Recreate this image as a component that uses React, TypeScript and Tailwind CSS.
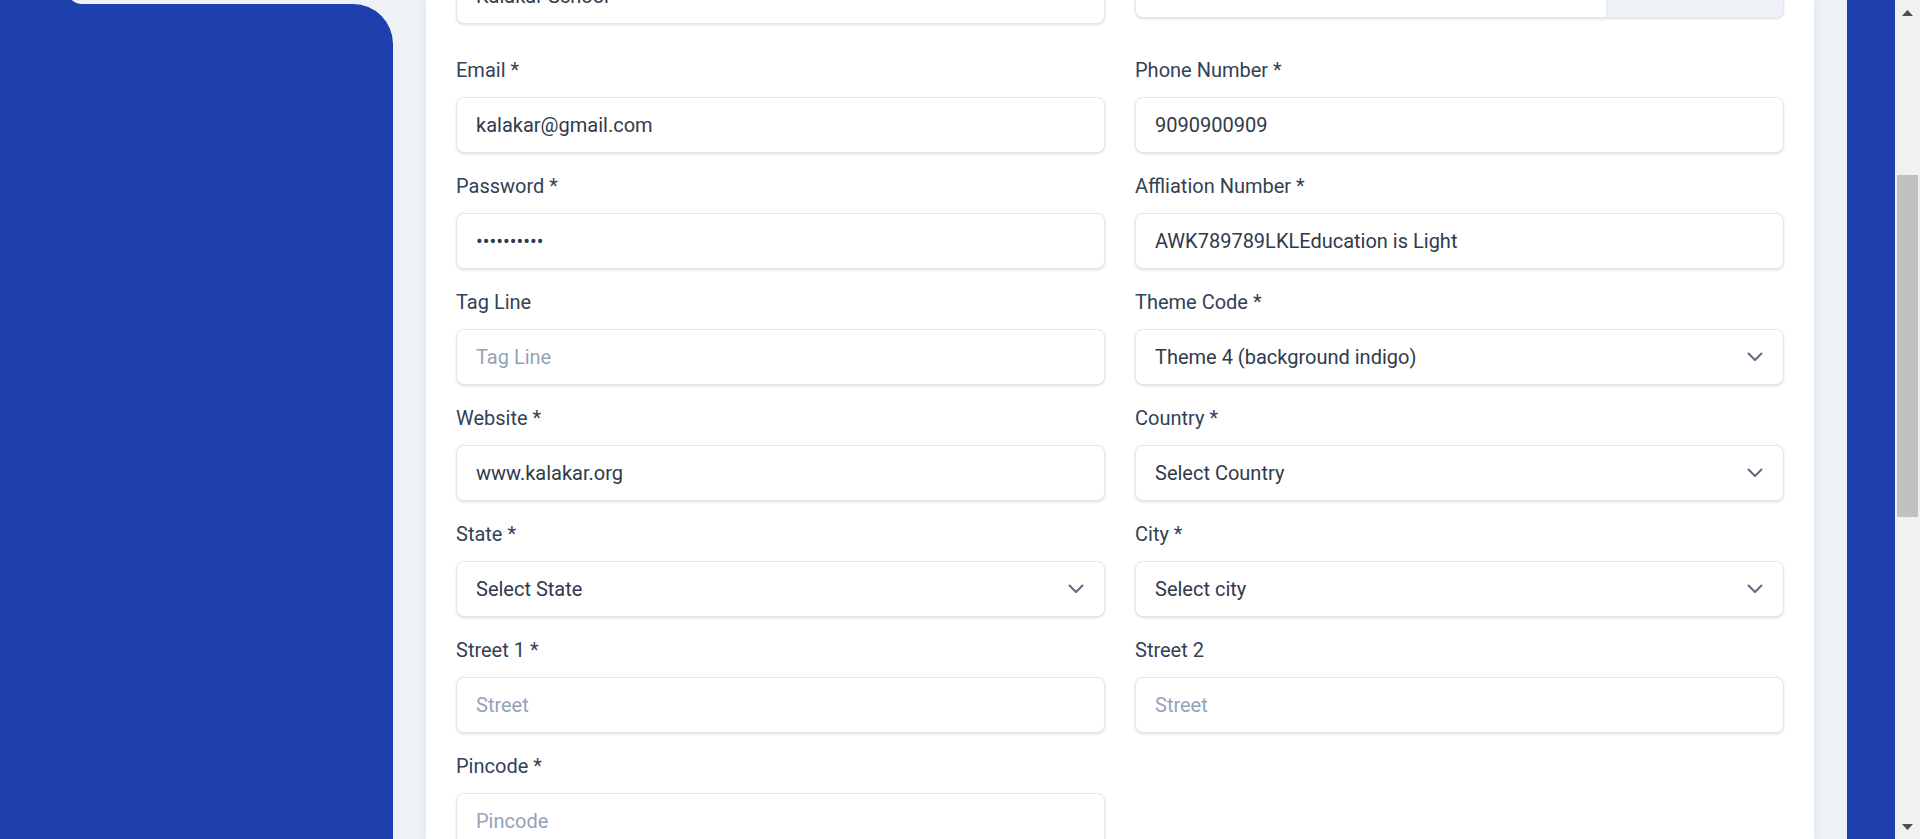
import React from 'react';

type Field = {
  label: string;
  kind: 'text' | 'password' | 'select' | 'file';
  value?: string;
  placeholder?: string;
};

const rows: Field[][] = [
  [
    { label: 'Email *', kind: 'text', value: 'kalakar@gmail.com' },
    { label: 'Phone Number *', kind: 'text', value: '9090900909' },
  ],
  [
    { label: 'Password *', kind: 'password', value: 'kalakar123' },
    { label: 'Affliation Number *', kind: 'text', value: 'AWK789789LKLEducation is Light' },
  ],
  [
    { label: 'Tag Line', kind: 'text', placeholder: 'Tag Line' },
    { label: 'Theme Code *', kind: 'select', value: 'Theme 4 (background indigo)' },
  ],
  [
    { label: 'Website *', kind: 'text', value: 'www.kalakar.org' },
    { label: 'Country *', kind: 'select', value: 'Select Country' },
  ],
  [
    { label: 'State *', kind: 'select', value: 'Select State' },
    { label: 'City *', kind: 'select', value: 'Select city' },
  ],
  [
    { label: 'Street 1 *', kind: 'text', placeholder: 'Street' },
    { label: 'Street 2', kind: 'text', placeholder: 'Street' },
  ],
  [{ label: 'Pincode *', kind: 'text', placeholder: 'Pincode' }],
];

const boxCls =
  'w-full rounded-[8px] border border-[#e2e8f0] bg-white shadow-sm text-[20px] text-[#303a4b] outline-none';

const Chevron = () => (
  <svg width="16" height="10" viewBox="0 0 16 10" fill="none">
    <path d="M1.5 1.5 L8 8 L14.5 1.5" stroke="#5f6b7a" strokeWidth="2" strokeLinecap="round" strokeLinejoin="round" />
  </svg>
);

const FormField: React.FC<{ field: Field; extra?: string }> = ({ field, extra = '' }) => {
  let control: React.ReactNode;
  if (field.kind === 'select') {
    control = (
      <div className={`${boxCls} flex h-[56px] items-center justify-between pl-[19px] pr-[20px]`}>
        <span>{field.value}</span>
        <Chevron />
      </div>
    );
  } else if (field.kind === 'file') {
    // file picker with grey browse addon
    control = (
      <div className={`${boxCls} flex h-[50px] overflow-hidden`}>
        <div className="flex-1" />
        <div className="w-[177px] border-l border-[#e2e8f0] bg-[#eef2f7]" />
      </div>
    );
  } else {
    control = (
      <input
        type={field.kind}
        readOnly
        defaultValue={field.value}
        placeholder={field.placeholder}
        className={`${boxCls} h-[56px] px-[19px] placeholder:text-[#94a3b8]`}
      />
    );
  }
  return (
    <div className={`flex flex-col ${extra}`}>
      <label className="mb-[14px] text-[20px] leading-[26px] text-[#334155]">{field.label}</label>
      {control}
    </div>
  );
};

const Scrollbar = () => (
  <div className="flex w-[25px] shrink-0 flex-col bg-[#f1f1f1]">
    <div className="flex h-[25px] items-center justify-center">
      <svg width="11" height="6" viewBox="0 0 11 6">
        <path d="M0 6 L5.5 0 L11 6 Z" fill="#505050" />
      </svg>
    </div>
    <div className="mx-[2px] mt-[150px] h-[342px] bg-[#c1c1c1]" />
    <div className="flex-1" />
    <div className="flex h-[25px] items-center justify-center">
      <svg width="11" height="6" viewBox="0 0 11 6">
        <path d="M0 0 L11 0 L5.5 6 Z" fill="#505050" />
      </svg>
    </div>
  </div>
);

const App: React.FC = () => {
  return (
    <div className="flex h-[839px] w-[1920px] overflow-hidden bg-[#eef2f7] font-['Roboto','Liberation_Sans',sans-serif]">
      {/* sidebar */}
      <aside className="flex w-[393px] shrink-0 flex-col bg-[#1e40af]">
        <div className="-mt-[26px] ml-[67px] h-[30px] rounded-l-[24px] bg-[#eef2f7]" />
        <div className="flex flex-1 flex-col bg-[#eef2f7]">
          <div className="flex-1 rounded-tr-[40px] bg-[#1e40af]" />
        </div>
      </aside>

      {/* content */}
      <main className="flex flex-1 px-[33px]">
        <div className="flex-1 bg-white px-[30px] shadow-[0_0_12px_rgba(15,23,42,0.06)]">
          <div className="-mt-[72px] grid grid-cols-2 gap-x-[30px] gap-y-[20px]">
            <FormField field={{ label: 'School Name *', kind: 'text', value: 'Kalakar School' }} extra="mb-[13px]" />
            <FormField field={{ label: 'Logo', kind: 'file' }} extra="mb-[13px]" />
            {rows.map((row, i) =>
              row.map((f, j) => <FormField key={`${i}-${j}`} field={f} />)
            )}
          </div>
        </div>
      </main>

      <div className="w-[48px] shrink-0 bg-[#1e40af]" />
      <Scrollbar />
    </div>
  );
};

export default App;
